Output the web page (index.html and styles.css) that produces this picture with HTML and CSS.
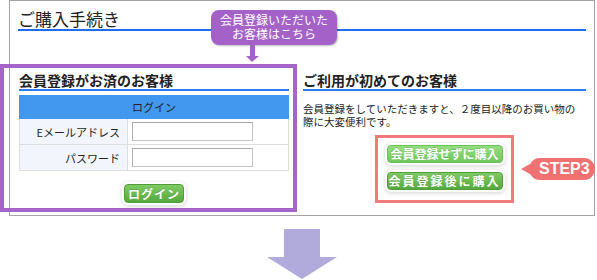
FILE: index.html
```html
<!DOCTYPE html>
<html lang="ja">
<head>
    <meta charset="UTF-8">
    <title>ご購入手続き</title>
    <link rel="stylesheet" href="styles.css">
</head>
<body>
    <div class="frame">
        <h1 class="title"><span>ご購入手続き</span></h1>
        <div class="callout">会員登録いただいた<br>お客様はこちら</div>
        <div class="highlight"></div>
        <div class="cols">
            <section class="col col-member">
                <h2>会員登録がお済のお客様</h2>
                <table class="login-table">
                    <tr><th colspan="2">ログイン</th></tr>
                    <tr><td class="label">Eメールアドレス</td><td class="field"><input type="text"></td></tr>
                    <tr><td class="label">パスワード</td><td class="field"><input type="password"></td></tr>
                </table>
                <div class="login-actions"><button class="btn-green btn-login">ログイン</button></div>
            </section>
            <section class="col col-guest">
                <h2>ご利用が初めてのお客様</h2>
                <p class="note">会員登録をしていただきますと、２度目以降のお買い物の<br>際に大変便利です。</p>
                <div class="buy-box">
                    <button class="btn-green btn-light">会員登録せずに購入</button>
                    <button class="btn-green btn-wide">会員登録後に購入</button>
                    <span class="step">STEP3</span>
                </div>
            </section>
        </div>
    </div>
    <div class="next">
        <svg width="70" height="50" viewBox="0 0 70 50"><polygon points="17,0 53,0 53,28 70,28 35,50 0,28 17,28" fill="#b1abdc"/></svg>
    </div>
</body>
</html>
```

FILE: styles.css
```css
* { margin: 0; padding: 0; box-sizing: border-box; }
body { font-family: "Noto Sans CJK JP", "Noto Sans", sans-serif; color: #222; background: #fff; }
.frame { position: relative; margin-left: 9px; width: 586px; height: 216px; border: 1px solid #a3a3a3; padding: 8px 8px 0; }
.title { font-size: 17px; font-weight: normal; line-height: 20px; border-bottom: 2px solid #1d6ff2; }
.callout { position: absolute; left: 201px; top: 9px; width: 126px; height: 35px; padding-top: 3px; background: #a462c8; border-radius: 8px; color: #fff; font-size: 12px; line-height: 14px; text-align: center; box-shadow: 1px 1px 2px rgba(0,0,0,0.25); }
.callout::before { content: ""; position: absolute; left: 39px; top: 35px; width: 5px; height: 12px; background: #a462c8; }
.callout::after { content: ""; position: absolute; left: 35px; top: 46px; border-left: 6px solid transparent; border-right: 7px solid transparent; border-top: 6px solid #a462c8; }
.highlight { position: absolute; left: -10px; top: 63px; width: 297px; height: 148px; border: 4px solid #a764c8; }
.cols { display: flex; gap: 14px; margin-top: 41px; padding-left: 1px; }
.col-member { width: 270px; }
.col-guest { flex: 1; }
.col h2 { font-size: 14px; font-weight: bold; line-height: 17px; border-bottom: 2px solid #2b7ff0; }
.login-table { width: 100%; border-collapse: collapse; margin-top: 4px; font-size: 11px; }
.login-table th { background: #4198ee; height: 23px; font-weight: normal; border: 1px solid #4198ee; }
.login-table td { border: 1px solid #dedede; height: 26px; }
.login-table .label { width: 108px; background: #f2f5fb; text-align: right; padding-right: 7px; }
.login-table .field { padding-left: 4px; }
.login-table input { display: block; width: 121px; height: 19px; border: 1px solid #c4c4c4; border-top-color: #a8a8a8; border-left-color: #b0b0b0; }
.login-actions { display: flex; justify-content: center; margin-top: 13px; }
.btn-green { font-family: inherit; font-size: 12px; font-weight: bold; color: #fff; line-height: 16px; border: 1px solid #4e9d38; border-radius: 4px; background: linear-gradient(#7fcb65, #55a93d); box-shadow: 0 0 0 2px #fff, 0 1px 4px 2px rgba(0,0,0,0.18); text-shadow: 0 -1px 0 rgba(0,0,0,0.15); cursor: pointer; }
.btn-login { width: 60px; height: 19px; letter-spacing: 1px; }
.note { font-size: 10.5px; line-height: 13px; margin-top: 11px; }
.buy-box { position: relative; width: 139px; margin: 7px auto 0; border: 3px solid #f07b7b; padding: 7px 0 10px; display: flex; flex-direction: column; align-items: center; gap: 9px; }
.buy-box .btn-green { width: 116px; height: 18px; }
.btn-light { background: linear-gradient(#95df80, #6fc75c); border-color: #6cc159; }
.btn-wide { letter-spacing: 2px; }
.step { position: absolute; left: 151px; top: 20px; height: 22px; padding: 0 5px 0 10px; background: #f07171; border-radius: 11px; color: #fff; font-family: "Liberation Sans", Arial, sans-serif; font-size: 16px; font-weight: bold; line-height: 22px; }
.step::before { content: ""; position: absolute; left: -8px; top: 6px; border-top: 5px solid transparent; border-bottom: 5px solid transparent; border-right: 9px solid #f07171; }
.next { width: 586px; margin: 13px 0 0 9px; display: flex; justify-content: center; }
.next svg { display: block; }
```
